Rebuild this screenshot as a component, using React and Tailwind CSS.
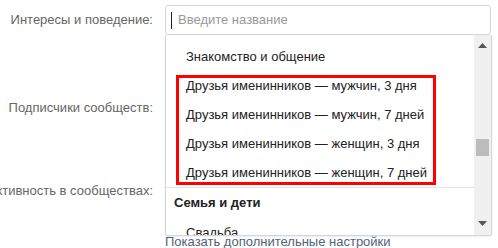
import React from "react";

const items = [
  "Друзья именинников — мужчин, 3 дня",
  "Друзья именинников — мужчин, 7 дней",
  "Друзья именинников — женщин, 3 дня",
  "Друзья именинников — женщин, 7 дней",
];

function Label({ children, className = "" }) {
  return (
    <div className={`w-[153px] shrink-0 flex justify-end items-center ${className}`}>
      <span className="whitespace-nowrap text-[#666]">{children}</span>
    </div>
  );
}

export default function App() {
  return (
    <div
      className="relative w-[498px] h-[248px] overflow-hidden bg-white text-[13px] leading-[16px]"
      style={{ fontFamily: '"Liberation Sans", Arial, sans-serif' }}
    >
      {/* form rows */}
      <div className="flex flex-col pt-[5px]">
        <div className="flex h-[30px]">
          <Label>Интересы и поведение:</Label>
          <div className="ml-[12px] w-[326px] h-[30px] border border-[#d6d6d6] rounded-[3px] flex items-center">
            <span className="ml-[5px] w-px h-[17px] bg-[#222]" />
            <span className="ml-[6px] text-[#999]">Введите название</span>
          </div>
        </div>
        <div className="flex h-[20px] mt-[63px]">
          <Label>Подписчики сообществ:</Label>
        </div>
        <div className="flex h-[20px] mt-[63px]">
          <Label>Активность в сообществах:</Label>
        </div>
        <div className="h-[18px] mt-[32px] pl-[165px] flex items-center">
          <span className="text-[#4f6479] whitespace-nowrap">Показать дополнительные настройки</span>
        </div>
      </div>

      {/* dropdown */}
      <div className="absolute left-[165px] top-[35px] w-[327px] h-[201px] bg-white border border-t-0 border-[#d6d6d6] rounded-b-[3px] flex overflow-hidden shadow-[0_1px_2px_rgba(0,0,0,0.08)]">
        <div className="relative flex-1 overflow-hidden text-[#222]">
          <div className="flex flex-col pt-[7px]">
            <div className="h-[29px] pl-[20px] flex items-center">Знакомство и общение</div>
            {items.map((t) => (
              <div key={t} className="h-[29px] pl-[20px] flex items-center whitespace-nowrap">
                {t}
              </div>
            ))}
            <div className="border-t border-[#e3e3e3] h-[31px] pl-[8px] flex items-center font-bold">
              Семья и дети
            </div>
            <div className="h-[29px] pl-[20px] flex items-center">Свадьба</div>
          </div>
          {/* highlight */}
          <div className="absolute left-[10px] top-[40px] w-[260px] h-[110px] border-[3px] border-[#f00]" />
        </div>
        <div className="w-[17px] bg-[#f0f0f0] flex flex-col items-center">
          <svg width="9" height="5" viewBox="0 0 9 5" className="mt-[8px]">
            <path d="M0 5 L4.5 0 L9 5 Z" fill="#555" />
          </svg>
          <div className="mt-[91px] w-[13px] h-[17px] bg-[#bcbcbc]" />
          <div className="flex-1" />
          <svg width="9" height="5" viewBox="0 0 9 5" className="mb-[9px]">
            <path d="M0 0 L9 0 L4.5 5 Z" fill="#555" />
          </svg>
        </div>
      </div>
    </div>
  );
}
